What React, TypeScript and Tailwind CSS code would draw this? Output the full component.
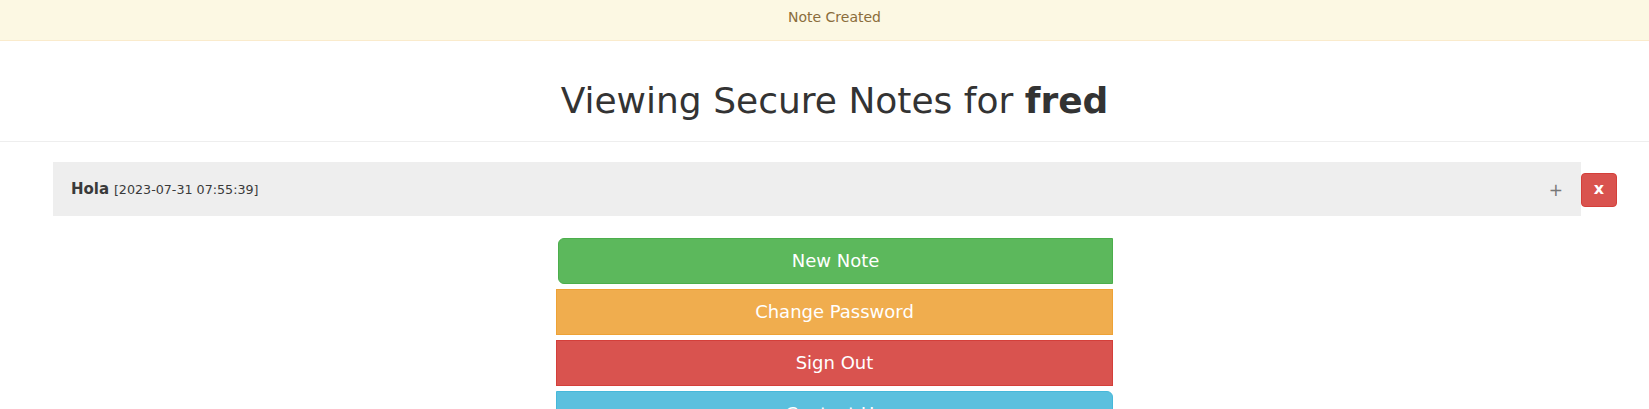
import React from "react";

export default function App() {
  return (
    <div className="min-h-[409px] bg-white text-[#333] font-['DejaVu_Sans',sans-serif]">
      <div className="h-[41px] bg-[#fcf8e3] border-b border-[#faebcc] pt-[7px] pl-[20px] text-center text-[14px] leading-[20px] text-[#8a6d3b]">
        Note Created
      </div>
      <div className="pt-[40px] pb-[20px] pl-[20px] border-b border-[#eeeeee]">
        <h1 className="text-center text-[36px] leading-[39.6px] text-[#333] font-normal">
          Viewing Secure Notes for <b className="font-bold">fred</b>
        </h1>
      </div>
      <div className="mt-[20px] flex pl-[53px] pr-[32px]">
        <div className="flex-1 h-[54px] bg-[#eeeeee] flex items-center pl-[18px] pr-[18px] pt-[2px]">
          <div className="flex-1 text-[15px] leading-[20px] text-[#3a3a3a]">
            <b className="font-bold">Hola</b>{" "}
            <span className="text-[12.7px] text-[#3a3a3a]">[2023-07-31 07:55:39]</span>
          </div>
          <span className="text-[17px] leading-[20px] text-[#777]">+</span>
        </div>
        <button className="mt-[11px] w-[36px] h-[34px] rounded-[4px] bg-[#d9534f] border border-[#d43f3a] text-white font-bold text-[16px] leading-[20px] flex items-center justify-center pb-[2px]">
          x
        </button>
      </div>
      <div className="mt-[22px] pl-[20px] flex justify-center">
        <div className="w-[557px] flex flex-col gap-[5px] text-white text-[18px] leading-[24px]">
          <button className="ml-[2px] h-[46px] bg-[#5cb85c] border border-[#4cae4c] rounded-l-[6px] text-center">
            New Note
          </button>
          <button className="h-[46px] bg-[#f0ad4e] border border-[#eea236] text-center">
            Change Password
          </button>
          <button className="h-[46px] bg-[#d9534f] border border-[#d43f3a] text-center">
            Sign Out
          </button>
          <button className="h-[46px] bg-[#5bc0de] border border-[#46b8da] rounded-tr-[6px] text-center">
            Contact Us
          </button>
        </div>
      </div>
    </div>
  );
}
